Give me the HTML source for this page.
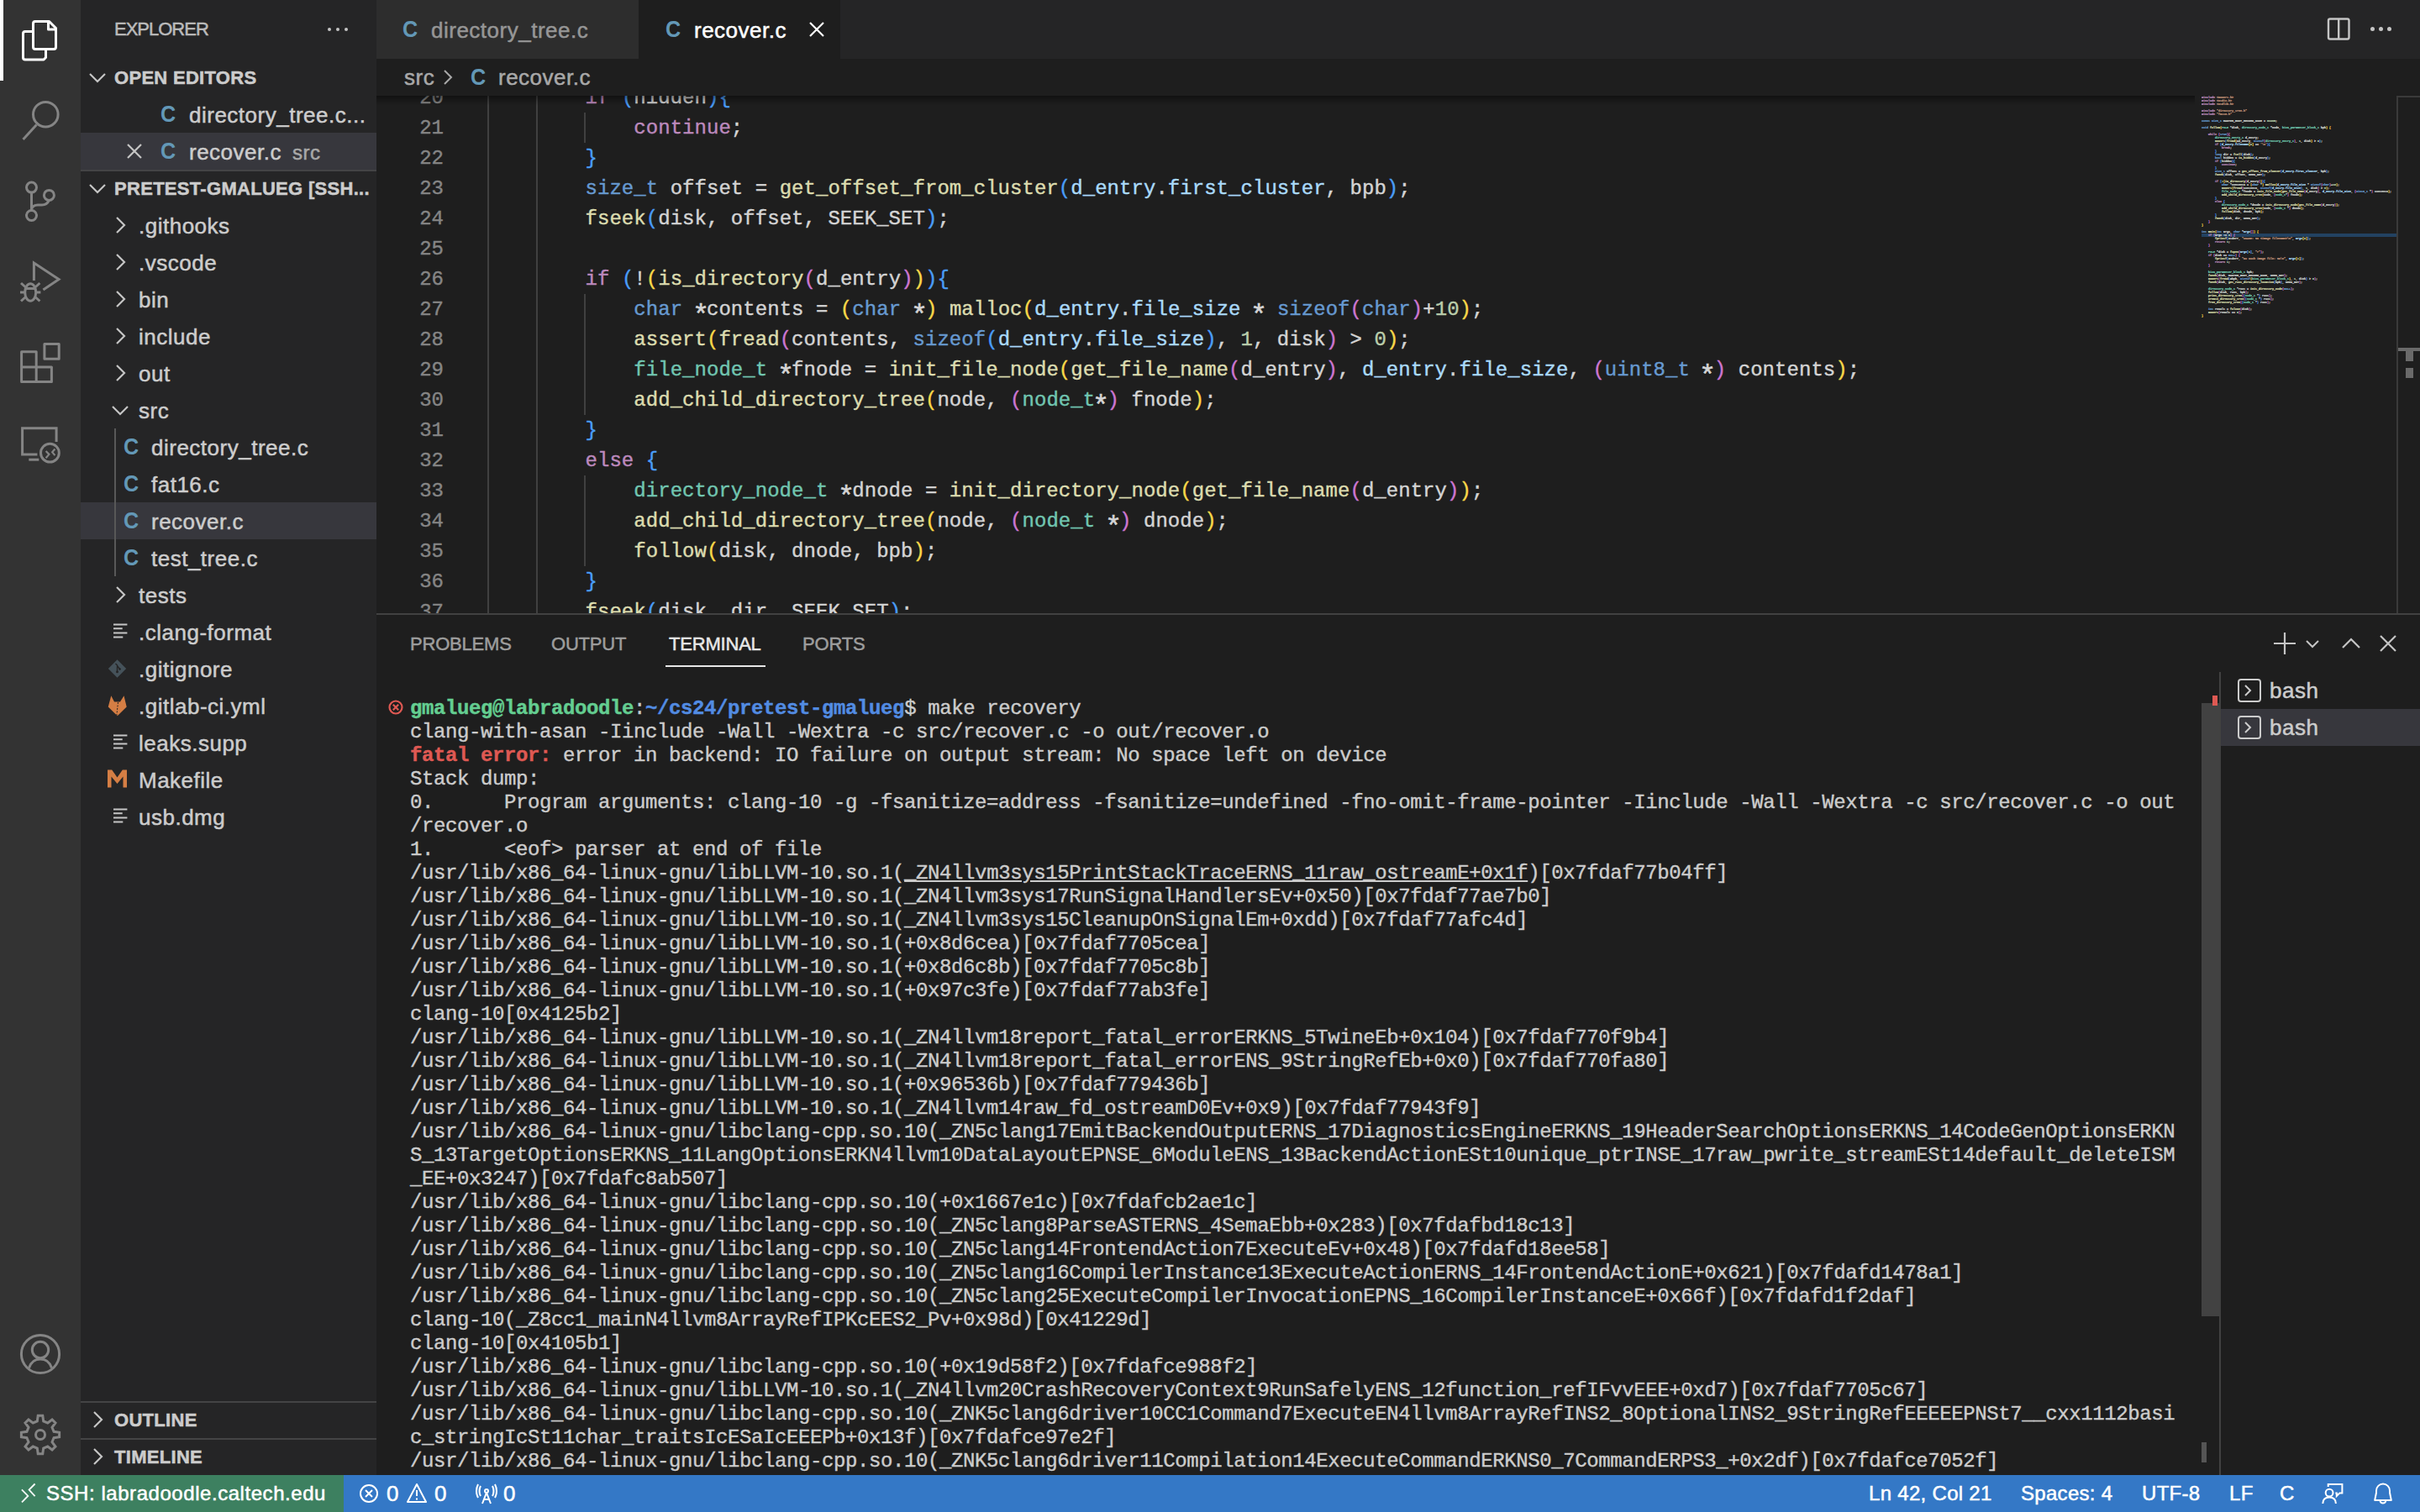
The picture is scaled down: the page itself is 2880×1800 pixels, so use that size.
<!DOCTYPE html><html><head><meta charset="utf-8"><style>
*{margin:0;padding:0;box-sizing:border-box}
html,body{width:2880px;height:1800px;overflow:hidden;background:#1e1e1e}
body{position:relative;font-family:"Liberation Sans",sans-serif;color:#cccccc}
.a{position:absolute}
.ui{font-family:"Liberation Sans",sans-serif;font-size:26px;letter-spacing:0.5px;white-space:pre;-webkit-text-stroke:0.5px currentColor}
.mono{font-family:"Liberation Mono",monospace;white-space:pre;-webkit-text-stroke:0.4px currentColor}
svg{position:absolute;overflow:visible}
</style></head><body><div class="a" style="left:0;top:0;width:96px;height:1756px;background:#333333"></div>
<div class="a" style="left:0;top:0;width:4px;height:96px;background:#ffffff"></div>
<svg style="left:0;top:0" width="96" height="96" fill="none" stroke="#ffffff" stroke-width="3" stroke-linejoin="round">
<path d="M54.5 58 V68.5 L52 71 H30 Q27.5 71 27.5 68.5 V40 Q27.5 37.5 30 37.5 H39.5"/>
<path d="M39.5 56 V28 Q39.5 25.5 42 25.5 H58.5 L66.5 33.5 V56 Q66.5 58.5 64 58.5 H42 Q39.5 58.5 39.5 56 Z" fill="#333333"/>
<path d="M57.5 25.5 V35 H66.5"/>
</svg>
<svg style="left:0;top:96px" width="96" height="96" fill="none" stroke="#858585" stroke-width="3">
<circle cx="54.3" cy="40.2" r="14.8"/>
<path d="M43.5 52.5 L27.5 70"/>
</svg>
<svg style="left:0;top:192px" width="96" height="96" fill="none" stroke="#858585" stroke-width="3">
<circle cx="37.5" cy="31.1" r="6"/>
<circle cx="58.4" cy="40.4" r="6"/>
<circle cx="37.5" cy="64.5" r="6"/>
<path d="M37.5 37.1 V58.5"/>
<path d="M58.4 46.4 Q56 52 50 52 H45 Q39 52 37.5 57"/>
</svg>
<svg style="left:0;top:288px" width="96" height="96" fill="none" stroke="#858585" stroke-width="3">
<path d="M40.4 46 V25 L70 44.5 L51.4 57"/>
<ellipse cx="36.2" cy="60" rx="6.5" ry="10.3"/>
<path d="M29.7 55.5 H42.7 M24 60 H29.7 M42.7 60 H48.4 M25 49 L30.5 54 M47.4 49 L41.9 54 M25 70.5 L30.5 65.5 M47.4 70.5 L41.9 65.5"/>
</svg>
<svg style="left:0;top:384px" width="96" height="96" fill="none" stroke="#858585" stroke-width="3" stroke-linejoin="round">
<path d="M52.9 25.4 H70.2 V43.2 H52.9 Z"/>
<path d="M25.6 34.8 H43.2 V53 H61.4 V70.5 H25.6 Z"/>
<path d="M25.6 53 H43.2 V70.5"/>
</svg>
<svg style="left:0;top:480px" width="96" height="96" fill="none" stroke="#858585" stroke-width="3">
<path d="M67.1 46 V29.7 H26.6 V61.1 H44.4"/>
<path d="M34.3 67.2 H46.3"/>
<circle cx="59.4" cy="59.2" r="10.9"/>
<path d="M54.6 57 L58.4 60.9 L54.6 65.3 M65.4 54.5 L62.2 58.3 L65.4 62.1" stroke-width="2.2"/>
</svg>
<svg style="left:0;top:1564px" width="96" height="96" fill="none" stroke="#858585" stroke-width="3">
<circle cx="48" cy="48" r="22.6"/>
<circle cx="48" cy="43" r="9.7"/>
<path d="M34.5 64.5 Q38 54 48 54 Q58 54 61.5 64.5"/>
</svg>
<svg style="left:0;top:1660px" width="96" height="96" fill="none" stroke="#858585" stroke-width="3" stroke-linejoin="miter">
<path d="M44.29 31.92 L45.22 25.37 L50.78 25.37 L51.71 31.92 L56.74 34.01 L62.04 30.03 L65.97 33.96 L61.99 39.26 L64.08 44.29 L70.63 45.22 L70.63 50.78 L64.08 51.71 L61.99 56.74 L65.97 62.04 L62.04 65.97 L56.74 61.99 L51.71 64.08 L50.78 70.63 L45.22 70.63 L44.29 64.08 L39.26 61.99 L33.96 65.97 L30.03 62.04 L34.01 56.74 L31.92 51.71 L25.37 50.78 L25.37 45.22 L31.92 44.29 L34.01 39.26 L30.03 33.96 L33.96 30.03 L39.26 34.01 Z"/>
<circle cx="48" cy="48" r="5.5"/>
</svg>
<div class="a" style="left:96px;top:0;width:352px;height:1756px;background:#252526"></div>
<div class="a ui" style="left:136px;top:0;height:70px;line-height:70px;font-size:22px;letter-spacing:-1px;color:#bbbbbb">EXPLORER</div>
<div class="a" style="left:390px;top:33px;width:4px;height:4px;border-radius:50%;background:#c5c5c5"></div>
<div class="a" style="left:400px;top:33px;width:4px;height:4px;border-radius:50%;background:#c5c5c5"></div>
<div class="a" style="left:410px;top:33px;width:4px;height:4px;border-radius:50%;background:#c5c5c5"></div>
<svg style="left:104px;top:80px" width="24" height="24" fill="none" stroke="#c5c5c5" stroke-width="2.2"><path d="M3 8 L12 17 L21 8"/></svg><div class="a ui" style="left:136px;top:71px;height:44px;line-height:44px;font-size:22px;font-weight:bold;letter-spacing:0.3px;color:#cccccc">OPEN EDITORS</div>
<div class="a" style="left:191px;top:114px;height:44px;line-height:44px;font-family:'Liberation Sans',sans-serif;font-weight:bold;font-size:28px;transform:scaleX(0.9);transform-origin:0 0;color:#6398b7">C</div>
<div class="a ui" style="left:225px;top:115px;height:44px;line-height:44px">directory_tree.c...</div>
<div class="a" style="left:96px;top:158px;width:352px;height:44px;background:#37373d"></div>
<svg style="left:148px;top:168px" width="24" height="24" fill="none" stroke="#c5c5c5" stroke-width="2.2"><path d="M4 4 L20 20 M20 4 L4 20"/></svg>
<div class="a" style="left:191px;top:158px;height:44px;line-height:44px;font-family:'Liberation Sans',sans-serif;font-weight:bold;font-size:28px;transform:scaleX(0.9);transform-origin:0 0;color:#6398b7">C</div>
<div class="a ui" style="left:225px;top:159px;height:44px;line-height:44px">recover.c<span style="margin-left:13px;font-size:24px;color:#a8a8a8">src</span></div>
<div class="a" style="left:96px;top:202px;width:352px;height:2px;background:#444445"></div><svg style="left:104px;top:212px" width="24" height="24" fill="none" stroke="#c5c5c5" stroke-width="2.2"><path d="M3 8 L12 17 L21 8"/></svg><div class="a ui" style="left:136px;top:203px;height:44px;line-height:44px;font-size:22px;font-weight:bold;letter-spacing:0.3px;color:#cccccc">PRETEST-GMALUEG [SSH...</div>
<svg style="left:131px;top:256px" width="24" height="24" fill="none" stroke="#c5c5c5" stroke-width="2.2"><path d="M8 3 L17 12 L8 21"/></svg>
<div class="a ui" style="left:165px;top:247px;height:44px;line-height:44px">.githooks</div>
<svg style="left:131px;top:300px" width="24" height="24" fill="none" stroke="#c5c5c5" stroke-width="2.2"><path d="M8 3 L17 12 L8 21"/></svg>
<div class="a ui" style="left:165px;top:291px;height:44px;line-height:44px">.vscode</div>
<svg style="left:131px;top:344px" width="24" height="24" fill="none" stroke="#c5c5c5" stroke-width="2.2"><path d="M8 3 L17 12 L8 21"/></svg>
<div class="a ui" style="left:165px;top:335px;height:44px;line-height:44px">bin</div>
<svg style="left:131px;top:388px" width="24" height="24" fill="none" stroke="#c5c5c5" stroke-width="2.2"><path d="M8 3 L17 12 L8 21"/></svg>
<div class="a ui" style="left:165px;top:379px;height:44px;line-height:44px">include</div>
<svg style="left:131px;top:432px" width="24" height="24" fill="none" stroke="#c5c5c5" stroke-width="2.2"><path d="M8 3 L17 12 L8 21"/></svg>
<div class="a ui" style="left:165px;top:423px;height:44px;line-height:44px">out</div>
<svg style="left:131px;top:476px" width="24" height="24" fill="none" stroke="#c5c5c5" stroke-width="2.2"><path d="M3 8 L12 17 L21 8"/></svg>
<div class="a ui" style="left:165px;top:467px;height:44px;line-height:44px">src</div>
<div class="a" style="left:147px;top:510px;height:44px;line-height:44px;font-family:'Liberation Sans',sans-serif;font-weight:bold;font-size:28px;transform:scaleX(0.9);transform-origin:0 0;color:#6398b7">C</div>
<div class="a ui" style="left:180px;top:511px;height:44px;line-height:44px">directory_tree.c</div>
<div class="a" style="left:147px;top:554px;height:44px;line-height:44px;font-family:'Liberation Sans',sans-serif;font-weight:bold;font-size:28px;transform:scaleX(0.9);transform-origin:0 0;color:#6398b7">C</div>
<div class="a ui" style="left:180px;top:555px;height:44px;line-height:44px">fat16.c</div>
<div class="a" style="left:96px;top:598px;width:352px;height:44px;background:#37373d"></div>
<div class="a" style="left:147px;top:598px;height:44px;line-height:44px;font-family:'Liberation Sans',sans-serif;font-weight:bold;font-size:28px;transform:scaleX(0.9);transform-origin:0 0;color:#6398b7">C</div>
<div class="a ui" style="left:180px;top:599px;height:44px;line-height:44px">recover.c</div>
<div class="a" style="left:147px;top:642px;height:44px;line-height:44px;font-family:'Liberation Sans',sans-serif;font-weight:bold;font-size:28px;transform:scaleX(0.9);transform-origin:0 0;color:#6398b7">C</div>
<div class="a ui" style="left:180px;top:643px;height:44px;line-height:44px">test_tree.c</div>
<svg style="left:131px;top:696px" width="24" height="24" fill="none" stroke="#c5c5c5" stroke-width="2.2"><path d="M8 3 L17 12 L8 21"/></svg>
<div class="a ui" style="left:165px;top:687px;height:44px;line-height:44px">tests</div>
<svg style="left:130px;top:740px" width="24" height="24" fill="none" stroke="#c5c5c5" stroke-width="2"><path d="M5 3.5 H21.4 M5 8.3 H15.7 M5 13.5 H21.4 M5 18.6 H16.3"/></svg>
<div class="a ui" style="left:165px;top:731px;height:44px;line-height:44px">.clang-format</div>
<svg style="left:128px;top:783px" width="26" height="26"><path d="M11.5 2.3 L22.2 13 L11.5 23.7 L0.8 13 Z" fill="#45525a"/><path d="M9.5 7 L11.5 9 V16.5 M11.5 9.5 L14.5 13.5" stroke="#252526" stroke-width="1.4" fill="none"/><circle cx="11.5" cy="16.8" r="1.5" fill="#252526"/><circle cx="14.6" cy="13.6" r="1.3" fill="#252526"/></svg>
<div class="a ui" style="left:165px;top:775px;height:44px;line-height:44px">.gitignore</div>
<svg style="left:128px;top:827px" width="26" height="26"><path d="M0.75 14.6 L4.3 1.2 L8 8.5 H15 L19.5 1.2 L22.7 14.6 L11.7 25.3 Z" fill="#d57e44"/><path d="M12.5 9 L10.8 25" stroke="#252526" stroke-width="1" stroke-dasharray="2 1.5" fill="none"/></svg>
<div class="a ui" style="left:165px;top:819px;height:44px;line-height:44px">.gitlab-ci.yml</div>
<svg style="left:130px;top:872px" width="24" height="24" fill="none" stroke="#c5c5c5" stroke-width="2"><path d="M5 3.5 H21.4 M5 8.3 H15.7 M5 13.5 H21.4 M5 18.6 H16.3"/></svg>
<div class="a ui" style="left:165px;top:863px;height:44px;line-height:44px">leaks.supp</div>
<svg style="left:127px;top:914px" width="26" height="26"><path d="M1 23.5 V2.5 H6.2 L12.5 11.5 L18.8 2.5 H24 V23.5 H19.5 V10.5 L12.5 19 L5.5 10.5 V23.5 Z" fill="#d57e44"/></svg>
<div class="a ui" style="left:165px;top:907px;height:44px;line-height:44px">Makefile</div>
<svg style="left:130px;top:960px" width="24" height="24" fill="none" stroke="#c5c5c5" stroke-width="2"><path d="M5 3.5 H21.4 M5 8.3 H15.7 M5 13.5 H21.4 M5 18.6 H16.3"/></svg>
<div class="a ui" style="left:165px;top:951px;height:44px;line-height:44px">usb.dmg</div>
<div class="a" style="left:136px;top:510px;width:2px;height:176px;background:#585858"></div>
<div class="a" style="left:96px;top:1668px;width:352px;height:2px;background:#444445"></div><svg style="left:104px;top:1678px" width="24" height="24" fill="none" stroke="#c5c5c5" stroke-width="2.2"><path d="M8 3 L17 12 L8 21"/></svg><div class="a ui" style="left:136px;top:1669px;height:44px;line-height:44px;font-size:22px;font-weight:bold;letter-spacing:0.3px;color:#cccccc">OUTLINE</div>
<div class="a" style="left:96px;top:1712px;width:352px;height:2px;background:#444445"></div><svg style="left:104px;top:1722px" width="24" height="24" fill="none" stroke="#c5c5c5" stroke-width="2.2"><path d="M8 3 L17 12 L8 21"/></svg><div class="a ui" style="left:136px;top:1713px;height:44px;line-height:44px;font-size:22px;font-weight:bold;letter-spacing:0.3px;color:#cccccc">TIMELINE</div>
<div class="a" style="left:448px;top:0;width:2432px;height:70px;background:#252526"></div>
<div class="a" style="left:448px;top:0;width:312px;height:70px;background:#2d2d2d"></div>
<div class="a" style="left:760px;top:0;width:240px;height:70px;background:#1e1e1e"></div>
<div class="a" style="left:479px;top:13px;height:44px;line-height:44px;font-weight:bold;font-size:28px;transform:scaleX(0.9);transform-origin:0 0;color:#6398b7">C</div>
<div class="a ui" style="left:513px;top:1px;height:70px;line-height:70px;color:#969696">directory_tree.c</div>
<div class="a" style="left:792px;top:13px;height:44px;line-height:44px;font-weight:bold;font-size:28px;transform:scaleX(0.9);transform-origin:0 0;color:#6398b7">C</div>
<div class="a ui" style="left:826px;top:1px;height:70px;line-height:70px;color:#ffffff">recover.c</div>
<svg style="left:960px;top:23px" width="24" height="24" fill="none" stroke="#ffffff" stroke-width="2.2"><path d="M4 4 L20 20 M20 4 L4 20"/></svg>
<svg style="left:2760px;top:11px" width="48" height="48" fill="none" stroke="#c5c5c5" stroke-width="2.4"><rect x="11" y="11.5" width="24.5" height="24" rx="2"/><path d="M23.2 11.5 V35.5"/></svg>
<div class="a" style="left:2821px;top:32px;width:5px;height:5px;border-radius:50%;background:#c5c5c5"></div>
<div class="a" style="left:2831px;top:32px;width:5px;height:5px;border-radius:50%;background:#c5c5c5"></div>
<div class="a" style="left:2841px;top:32px;width:5px;height:5px;border-radius:50%;background:#c5c5c5"></div>
<div class="a" style="left:448px;top:70px;width:2432px;height:44px;background:#1e1e1e"></div>
<div class="a ui" style="left:481px;top:70px;height:44px;line-height:44px;color:#a9a9a9">src</div>
<svg style="left:522px;top:81px" width="22" height="22" fill="none" stroke="#a9a9a9" stroke-width="2"><path d="M7 3 L15 11 L7 19"/></svg>
<div class="a" style="left:560px;top:70px;height:44px;line-height:44px;font-weight:bold;font-size:28px;transform:scaleX(0.9);transform-origin:0 0;color:#6398b7">C</div>
<div class="a ui" style="left:593px;top:70px;height:44px;line-height:44px;color:#a9a9a9">recover.c</div>
<div class="a" style="left:448px;top:114px;width:2432px;height:616px;overflow:hidden;background:#1e1e1e">
<div class="a mono" style="left:0;top:-15px;width:80px;text-align:right;height:36px;line-height:36px;font-size:24px;color:#858585">20</div>
<div class="a" style="left:132px;top:-16px;width:2px;height:36px;background:#404040"></div>
<div class="a" style="left:190px;top:-16px;width:2px;height:36px;background:#404040"></div>
<div class="a mono" style="left:133px;top:-15px;height:36px;line-height:36px;font-size:24px;letter-spacing:0.04px;color:#d4d4d4">        <span style="color:#bc89bd">if</span> <span style="color:#4a9df8">(</span>hidden<span style="color:#4a9df8">)</span><span style="color:#4a9df8">{</span></div>
<div class="a mono" style="left:0;top:21px;width:80px;text-align:right;height:36px;line-height:36px;font-size:24px;color:#858585">21</div>
<div class="a" style="left:132px;top:20px;width:2px;height:36px;background:#404040"></div>
<div class="a" style="left:190px;top:20px;width:2px;height:36px;background:#404040"></div>
<div class="a" style="left:247px;top:20px;width:2px;height:36px;background:#404040"></div>
<div class="a mono" style="left:133px;top:21px;height:36px;line-height:36px;font-size:24px;letter-spacing:0.04px;color:#d4d4d4">            <span style="color:#bc89bd">continue</span>;</div>
<div class="a mono" style="left:0;top:57px;width:80px;text-align:right;height:36px;line-height:36px;font-size:24px;color:#858585">22</div>
<div class="a" style="left:132px;top:56px;width:2px;height:36px;background:#404040"></div>
<div class="a" style="left:190px;top:56px;width:2px;height:36px;background:#404040"></div>
<div class="a mono" style="left:133px;top:57px;height:36px;line-height:36px;font-size:24px;letter-spacing:0.04px;color:#d4d4d4">        <span style="color:#4a9df8">}</span></div>
<div class="a mono" style="left:0;top:93px;width:80px;text-align:right;height:36px;line-height:36px;font-size:24px;color:#858585">23</div>
<div class="a" style="left:132px;top:92px;width:2px;height:36px;background:#404040"></div>
<div class="a" style="left:190px;top:92px;width:2px;height:36px;background:#404040"></div>
<div class="a mono" style="left:133px;top:93px;height:36px;line-height:36px;font-size:24px;letter-spacing:0.04px;color:#d4d4d4">        <span style="color:#679ad1">size_t</span> offset = <span style="color:#dcdcaf">get_offset_from_cluster</span><span style="color:#4a9df8">(</span><span style="color:#aadafa">d_entry</span>.<span style="color:#aadafa">first_cluster</span>, bpb<span style="color:#4a9df8">)</span>;</div>
<div class="a mono" style="left:0;top:129px;width:80px;text-align:right;height:36px;line-height:36px;font-size:24px;color:#858585">24</div>
<div class="a" style="left:132px;top:128px;width:2px;height:36px;background:#404040"></div>
<div class="a" style="left:190px;top:128px;width:2px;height:36px;background:#404040"></div>
<div class="a mono" style="left:133px;top:129px;height:36px;line-height:36px;font-size:24px;letter-spacing:0.04px;color:#d4d4d4">        <span style="color:#dcdcaf">fseek</span><span style="color:#4a9df8">(</span>disk, offset, SEEK_SET<span style="color:#4a9df8">)</span>;</div>
<div class="a mono" style="left:0;top:165px;width:80px;text-align:right;height:36px;line-height:36px;font-size:24px;color:#858585">25</div>
<div class="a" style="left:132px;top:164px;width:2px;height:36px;background:#404040"></div>
<div class="a" style="left:190px;top:164px;width:2px;height:36px;background:#404040"></div>
<div class="a mono" style="left:133px;top:165px;height:36px;line-height:36px;font-size:24px;letter-spacing:0.04px;color:#d4d4d4"></div>
<div class="a mono" style="left:0;top:201px;width:80px;text-align:right;height:36px;line-height:36px;font-size:24px;color:#858585">26</div>
<div class="a" style="left:132px;top:200px;width:2px;height:36px;background:#404040"></div>
<div class="a" style="left:190px;top:200px;width:2px;height:36px;background:#404040"></div>
<div class="a mono" style="left:133px;top:201px;height:36px;line-height:36px;font-size:24px;letter-spacing:0.04px;color:#d4d4d4">        <span style="color:#bc89bd">if</span> <span style="color:#4a9df8">(</span>!<span style="color:#f9d849">(</span><span style="color:#dcdcaf">is_directory</span><span style="color:#cc76d1">(</span>d_entry<span style="color:#cc76d1">)</span><span style="color:#f9d849">)</span><span style="color:#4a9df8">)</span><span style="color:#4a9df8">{</span></div>
<div class="a mono" style="left:0;top:237px;width:80px;text-align:right;height:36px;line-height:36px;font-size:24px;color:#858585">27</div>
<div class="a" style="left:132px;top:236px;width:2px;height:36px;background:#404040"></div>
<div class="a" style="left:190px;top:236px;width:2px;height:36px;background:#404040"></div>
<div class="a" style="left:247px;top:236px;width:2px;height:36px;background:#404040"></div>
<div class="a mono" style="left:133px;top:237px;height:36px;line-height:36px;font-size:24px;letter-spacing:0.04px;color:#d4d4d4">            <span style="color:#679ad1">char</span> <span style="display:inline-block;width:14.44px;transform:translateY(8px) scale(1.4)">*</span>contents = <span style="color:#f9d849">(</span><span style="color:#679ad1">char</span> <span style="display:inline-block;width:14.44px;transform:translateY(8px) scale(1.4)">*</span><span style="color:#f9d849">)</span> <span style="color:#dcdcaf">malloc</span><span style="color:#f9d849">(</span><span style="color:#aadafa">d_entry</span>.<span style="color:#aadafa">file_size</span> <span style="display:inline-block;width:14.44px;transform:translateY(8px) scale(1.4)">*</span> <span style="color:#679ad1">sizeof</span><span style="color:#cc76d1">(</span><span style="color:#679ad1">char</span><span style="color:#cc76d1">)</span>+<span style="color:#bacdab">10</span><span style="color:#f9d849">)</span>;</div>
<div class="a mono" style="left:0;top:273px;width:80px;text-align:right;height:36px;line-height:36px;font-size:24px;color:#858585">28</div>
<div class="a" style="left:132px;top:272px;width:2px;height:36px;background:#404040"></div>
<div class="a" style="left:190px;top:272px;width:2px;height:36px;background:#404040"></div>
<div class="a" style="left:247px;top:272px;width:2px;height:36px;background:#404040"></div>
<div class="a mono" style="left:133px;top:273px;height:36px;line-height:36px;font-size:24px;letter-spacing:0.04px;color:#d4d4d4">            <span style="color:#dcdcaf">assert</span><span style="color:#f9d849">(</span><span style="color:#dcdcaf">fread</span><span style="color:#cc76d1">(</span>contents, <span style="color:#679ad1">sizeof</span><span style="color:#4a9df8">(</span><span style="color:#aadafa">d_entry</span>.<span style="color:#aadafa">file_size</span><span style="color:#4a9df8">)</span>, <span style="color:#bacdab">1</span>, disk<span style="color:#cc76d1">)</span> &gt; <span style="color:#bacdab">0</span><span style="color:#f9d849">)</span>;</div>
<div class="a mono" style="left:0;top:309px;width:80px;text-align:right;height:36px;line-height:36px;font-size:24px;color:#858585">29</div>
<div class="a" style="left:132px;top:308px;width:2px;height:36px;background:#404040"></div>
<div class="a" style="left:190px;top:308px;width:2px;height:36px;background:#404040"></div>
<div class="a" style="left:247px;top:308px;width:2px;height:36px;background:#404040"></div>
<div class="a mono" style="left:133px;top:309px;height:36px;line-height:36px;font-size:24px;letter-spacing:0.04px;color:#d4d4d4">            <span style="color:#71c6b1">file_node_t</span> <span style="display:inline-block;width:14.44px;transform:translateY(8px) scale(1.4)">*</span>fnode = <span style="color:#dcdcaf">init_file_node</span><span style="color:#f9d849">(</span><span style="color:#dcdcaf">get_file_name</span><span style="color:#cc76d1">(</span>d_entry<span style="color:#cc76d1">)</span>, <span style="color:#aadafa">d_entry</span>.<span style="color:#aadafa">file_size</span>, <span style="color:#cc76d1">(</span><span style="color:#679ad1">uint8_t</span> <span style="display:inline-block;width:14.44px;transform:translateY(8px) scale(1.4)">*</span><span style="color:#cc76d1">)</span> contents<span style="color:#f9d849">)</span>;</div>
<div class="a mono" style="left:0;top:345px;width:80px;text-align:right;height:36px;line-height:36px;font-size:24px;color:#858585">30</div>
<div class="a" style="left:132px;top:344px;width:2px;height:36px;background:#404040"></div>
<div class="a" style="left:190px;top:344px;width:2px;height:36px;background:#404040"></div>
<div class="a" style="left:247px;top:344px;width:2px;height:36px;background:#404040"></div>
<div class="a mono" style="left:133px;top:345px;height:36px;line-height:36px;font-size:24px;letter-spacing:0.04px;color:#d4d4d4">            <span style="color:#dcdcaf">add_child_directory_tree</span><span style="color:#f9d849">(</span>node, <span style="color:#cc76d1">(</span><span style="color:#71c6b1">node_t</span><span style="display:inline-block;width:14.44px;transform:translateY(8px) scale(1.4)">*</span><span style="color:#cc76d1">)</span> fnode<span style="color:#f9d849">)</span>;</div>
<div class="a mono" style="left:0;top:381px;width:80px;text-align:right;height:36px;line-height:36px;font-size:24px;color:#858585">31</div>
<div class="a" style="left:132px;top:380px;width:2px;height:36px;background:#404040"></div>
<div class="a" style="left:190px;top:380px;width:2px;height:36px;background:#404040"></div>
<div class="a mono" style="left:133px;top:381px;height:36px;line-height:36px;font-size:24px;letter-spacing:0.04px;color:#d4d4d4">        <span style="color:#4a9df8">}</span></div>
<div class="a mono" style="left:0;top:417px;width:80px;text-align:right;height:36px;line-height:36px;font-size:24px;color:#858585">32</div>
<div class="a" style="left:132px;top:416px;width:2px;height:36px;background:#404040"></div>
<div class="a" style="left:190px;top:416px;width:2px;height:36px;background:#404040"></div>
<div class="a mono" style="left:133px;top:417px;height:36px;line-height:36px;font-size:24px;letter-spacing:0.04px;color:#d4d4d4">        <span style="color:#bc89bd">else</span> <span style="color:#4a9df8">{</span></div>
<div class="a mono" style="left:0;top:453px;width:80px;text-align:right;height:36px;line-height:36px;font-size:24px;color:#858585">33</div>
<div class="a" style="left:132px;top:452px;width:2px;height:36px;background:#404040"></div>
<div class="a" style="left:190px;top:452px;width:2px;height:36px;background:#404040"></div>
<div class="a" style="left:247px;top:452px;width:2px;height:36px;background:#404040"></div>
<div class="a mono" style="left:133px;top:453px;height:36px;line-height:36px;font-size:24px;letter-spacing:0.04px;color:#d4d4d4">            <span style="color:#71c6b1">directory_node_t</span> <span style="display:inline-block;width:14.44px;transform:translateY(8px) scale(1.4)">*</span>dnode = <span style="color:#dcdcaf">init_directory_node</span><span style="color:#f9d849">(</span><span style="color:#dcdcaf">get_file_name</span><span style="color:#cc76d1">(</span>d_entry<span style="color:#cc76d1">)</span><span style="color:#f9d849">)</span>;</div>
<div class="a mono" style="left:0;top:489px;width:80px;text-align:right;height:36px;line-height:36px;font-size:24px;color:#858585">34</div>
<div class="a" style="left:132px;top:488px;width:2px;height:36px;background:#404040"></div>
<div class="a" style="left:190px;top:488px;width:2px;height:36px;background:#404040"></div>
<div class="a" style="left:247px;top:488px;width:2px;height:36px;background:#404040"></div>
<div class="a mono" style="left:133px;top:489px;height:36px;line-height:36px;font-size:24px;letter-spacing:0.04px;color:#d4d4d4">            <span style="color:#dcdcaf">add_child_directory_tree</span><span style="color:#f9d849">(</span>node, <span style="color:#cc76d1">(</span><span style="color:#71c6b1">node_t</span> <span style="display:inline-block;width:14.44px;transform:translateY(8px) scale(1.4)">*</span><span style="color:#cc76d1">)</span> dnode<span style="color:#f9d849">)</span>;</div>
<div class="a mono" style="left:0;top:525px;width:80px;text-align:right;height:36px;line-height:36px;font-size:24px;color:#858585">35</div>
<div class="a" style="left:132px;top:524px;width:2px;height:36px;background:#404040"></div>
<div class="a" style="left:190px;top:524px;width:2px;height:36px;background:#404040"></div>
<div class="a" style="left:247px;top:524px;width:2px;height:36px;background:#404040"></div>
<div class="a mono" style="left:133px;top:525px;height:36px;line-height:36px;font-size:24px;letter-spacing:0.04px;color:#d4d4d4">            <span style="color:#dcdcaf">follow</span><span style="color:#f9d849">(</span>disk, dnode, bpb<span style="color:#f9d849">)</span>;</div>
<div class="a mono" style="left:0;top:561px;width:80px;text-align:right;height:36px;line-height:36px;font-size:24px;color:#858585">36</div>
<div class="a" style="left:132px;top:560px;width:2px;height:36px;background:#404040"></div>
<div class="a" style="left:190px;top:560px;width:2px;height:36px;background:#404040"></div>
<div class="a mono" style="left:133px;top:561px;height:36px;line-height:36px;font-size:24px;letter-spacing:0.04px;color:#d4d4d4">        <span style="color:#4a9df8">}</span></div>
<div class="a mono" style="left:0;top:597px;width:80px;text-align:right;height:36px;line-height:36px;font-size:24px;color:#858585">37</div>
<div class="a" style="left:132px;top:596px;width:2px;height:36px;background:#404040"></div>
<div class="a" style="left:190px;top:596px;width:2px;height:36px;background:#404040"></div>
<div class="a mono" style="left:133px;top:597px;height:36px;line-height:36px;font-size:24px;letter-spacing:0.04px;color:#d4d4d4">        <span style="color:#dcdcaf">fseek</span><span style="color:#4a9df8">(</span>disk, dir, SEEK_SET<span style="color:#4a9df8">)</span>;</div>
</div>
<div class="a" style="left:448px;top:114px;width:2164px;height:12px;background:linear-gradient(rgba(0,0,0,0.45) 0%,rgba(0,0,0,0.25) 35%,rgba(0,0,0,0) 100%)"></div>
<div class="a" style="left:2620px;top:114px;width:232px;height:616px;overflow:hidden">
<div class="a" style="left:0;top:164px;width:232px;height:4px;background:rgba(38,79,120,0.75)"></div>
<div class="a" style="left:0;top:0;font-family:'Liberation Mono',monospace;white-space:pre;font-size:10px;line-height:10px;font-weight:bold;color:#d4d4d4;transform:scale(0.3333,0.4);transform-origin:0 0;-webkit-text-stroke:0.6px currentColor"><span style="color:#bc89bd">#include</span> <span style="color:#c5947c">&lt;assert.h&gt;</span>
<span style="color:#bc89bd">#include</span> <span style="color:#c5947c">&lt;stdio.h&gt;</span>
<span style="color:#bc89bd">#include</span> <span style="color:#c5947c">&lt;stdlib.h&gt;</span>

<span style="color:#bc89bd">#include</span> <span style="color:#c5947c">&quot;directory_tree.h&quot;</span>
<span style="color:#bc89bd">#include</span> <span style="color:#c5947c">&quot;fat16.h&quot;</span>

<span style="color:#679ad1">const</span> <span style="color:#679ad1">size_t</span> MASTER_BOOT_RECORD_SIZE = <span style="color:#bacdab">0x20B</span>;

<span style="color:#679ad1">void</span> <span style="color:#dcdcaf">follow</span><span style="color:#f9d849">(</span><span style="color:#71c6b1">FILE</span> *disk, <span style="color:#71c6b1">directory_node_t</span> *node, <span style="color:#71c6b1">bios_parameter_block_t</span> bpb<span style="color:#f9d849">)</span> <span style="color:#f9d849">{</span>

    <span style="color:#bc89bd">while</span> <span style="color:#cc76d1">(</span><span style="color:#679ad1">true</span><span style="color:#cc76d1">)</span><span style="color:#cc76d1">{</span>
        <span style="color:#71c6b1">directory_entry_t</span> d_entry;
        <span style="color:#dcdcaf">assert</span><span style="color:#4a9df8">(</span><span style="color:#dcdcaf">fread</span><span style="color:#f9d849">(</span>&amp;d_entry, <span style="color:#679ad1">sizeof</span><span style="color:#cc76d1">(</span><span style="color:#71c6b1">directory_entry_t</span><span style="color:#cc76d1">)</span>, <span style="color:#bacdab">1</span>, disk<span style="color:#f9d849">)</span> &gt; <span style="color:#bacdab">0</span><span style="color:#4a9df8">)</span>;
        <span style="color:#bc89bd">if</span> <span style="color:#4a9df8">(</span><span style="color:#aadafa">d_entry</span>.<span style="color:#aadafa">filename</span><span style="color:#f9d849">[</span><span style="color:#bacdab">0</span><span style="color:#f9d849">]</span> == <span style="color:#c5947c">&#x27;\0&#x27;</span><span style="color:#4a9df8">)</span><span style="color:#4a9df8">{</span>
            <span style="color:#bc89bd">break</span>;
        <span style="color:#4a9df8">}</span>
        <span style="color:#679ad1">long</span> dir = <span style="color:#dcdcaf">ftell</span><span style="color:#4a9df8">(</span>disk<span style="color:#4a9df8">)</span>;
        <span style="color:#679ad1">bool</span> hidden = <span style="color:#dcdcaf">is_hidden</span><span style="color:#4a9df8">(</span>d_entry<span style="color:#4a9df8">)</span>;
        <span style="color:#bc89bd">if</span> <span style="color:#4a9df8">(</span>hidden<span style="color:#4a9df8">)</span><span style="color:#4a9df8">{</span>
            <span style="color:#bc89bd">continue</span>;
        <span style="color:#4a9df8">}</span>
        <span style="color:#679ad1">size_t</span> offset = <span style="color:#dcdcaf">get_offset_from_cluster</span><span style="color:#4a9df8">(</span><span style="color:#aadafa">d_entry</span>.<span style="color:#aadafa">first_cluster</span>, bpb<span style="color:#4a9df8">)</span>;
        <span style="color:#dcdcaf">fseek</span><span style="color:#4a9df8">(</span>disk, offset, SEEK_SET<span style="color:#4a9df8">)</span>;

        <span style="color:#bc89bd">if</span> <span style="color:#4a9df8">(</span>!<span style="color:#f9d849">(</span><span style="color:#dcdcaf">is_directory</span><span style="color:#cc76d1">(</span>d_entry<span style="color:#cc76d1">)</span><span style="color:#f9d849">)</span><span style="color:#4a9df8">)</span><span style="color:#4a9df8">{</span>
            <span style="color:#679ad1">char</span> *contents = <span style="color:#f9d849">(</span><span style="color:#679ad1">char</span> *<span style="color:#f9d849">)</span> <span style="color:#dcdcaf">malloc</span><span style="color:#f9d849">(</span><span style="color:#aadafa">d_entry</span>.<span style="color:#aadafa">file_size</span> * <span style="color:#679ad1">sizeof</span><span style="color:#cc76d1">(</span><span style="color:#679ad1">char</span><span style="color:#cc76d1">)</span>+<span style="color:#bacdab">10</span><span style="color:#f9d849">)</span>;
            <span style="color:#dcdcaf">assert</span><span style="color:#f9d849">(</span><span style="color:#dcdcaf">fread</span><span style="color:#cc76d1">(</span>contents, <span style="color:#679ad1">sizeof</span><span style="color:#4a9df8">(</span><span style="color:#aadafa">d_entry</span>.<span style="color:#aadafa">file_size</span><span style="color:#4a9df8">)</span>, <span style="color:#bacdab">1</span>, disk<span style="color:#cc76d1">)</span> &gt; <span style="color:#bacdab">0</span><span style="color:#f9d849">)</span>;
            <span style="color:#71c6b1">file_node_t</span> *fnode = <span style="color:#dcdcaf">init_file_node</span><span style="color:#f9d849">(</span><span style="color:#dcdcaf">get_file_name</span><span style="color:#cc76d1">(</span>d_entry<span style="color:#cc76d1">)</span>, <span style="color:#aadafa">d_entry</span>.<span style="color:#aadafa">file_size</span>, <span style="color:#cc76d1">(</span><span style="color:#679ad1">uint8_t</span> *<span style="color:#cc76d1">)</span> contents<span style="color:#f9d849">)</span>;
            <span style="color:#dcdcaf">add_child_directory_tree</span><span style="color:#f9d849">(</span>node, <span style="color:#cc76d1">(</span><span style="color:#71c6b1">node_t</span>*<span style="color:#cc76d1">)</span> fnode<span style="color:#f9d849">)</span>;
        <span style="color:#4a9df8">}</span>
        <span style="color:#bc89bd">else</span> <span style="color:#4a9df8">{</span>
            <span style="color:#71c6b1">directory_node_t</span> *dnode = <span style="color:#dcdcaf">init_directory_node</span><span style="color:#f9d849">(</span><span style="color:#dcdcaf">get_file_name</span><span style="color:#cc76d1">(</span>d_entry<span style="color:#cc76d1">)</span><span style="color:#f9d849">)</span>;
            <span style="color:#dcdcaf">add_child_directory_tree</span><span style="color:#f9d849">(</span>node, <span style="color:#cc76d1">(</span><span style="color:#71c6b1">node_t</span> *<span style="color:#cc76d1">)</span> dnode<span style="color:#f9d849">)</span>;
            <span style="color:#dcdcaf">follow</span><span style="color:#f9d849">(</span>disk, dnode, bpb<span style="color:#f9d849">)</span>;
        <span style="color:#4a9df8">}</span>
        <span style="color:#dcdcaf">fseek</span><span style="color:#4a9df8">(</span>disk, dir, SEEK_SET<span style="color:#4a9df8">)</span>;
    <span style="color:#cc76d1">}</span>
<span style="color:#f9d849">}</span>

<span style="color:#679ad1">int</span> <span style="color:#dcdcaf">main</span><span style="color:#f9d849">(</span><span style="color:#679ad1">int</span> argc, <span style="color:#679ad1">char</span> *<span style="color:#aadafa">argv</span><span style="color:#cc76d1">[</span><span style="color:#cc76d1">]</span><span style="color:#f9d849">)</span> <span style="color:#f9d849">{</span>
    <span style="color:#bc89bd">if</span> <span style="color:#cc76d1">(</span>argc != <span style="color:#bacdab">2</span><span style="color:#cc76d1">)</span> <span style="color:#cc76d1">{</span>
        <span style="color:#dcdcaf">fprintf</span><span style="color:#4a9df8">(</span>stderr, <span style="color:#c5947c">&quot;USAGE: %s &lt;image filename&gt;\n&quot;</span>, <span style="color:#aadafa">argv</span><span style="color:#f9d849">[</span><span style="color:#bacdab">0</span><span style="color:#f9d849">]</span><span style="color:#4a9df8">)</span>;
        <span style="color:#bc89bd">return</span> <span style="color:#bacdab">1</span>;
    <span style="color:#cc76d1">}</span>

    <span style="color:#71c6b1">FILE</span> *disk = <span style="color:#dcdcaf">fopen</span><span style="color:#cc76d1">(</span><span style="color:#aadafa">argv</span><span style="color:#4a9df8">[</span><span style="color:#bacdab">1</span><span style="color:#4a9df8">]</span>, <span style="color:#c5947c">&quot;r&quot;</span><span style="color:#cc76d1">)</span>;
    <span style="color:#bc89bd">if</span> <span style="color:#cc76d1">(</span>disk == <span style="color:#679ad1">NULL</span><span style="color:#cc76d1">)</span> <span style="color:#cc76d1">{</span>
        <span style="color:#dcdcaf">fprintf</span><span style="color:#4a9df8">(</span>stderr, <span style="color:#c5947c">&quot;No such image file: %s\n&quot;</span>, <span style="color:#aadafa">argv</span><span style="color:#f9d849">[</span><span style="color:#bacdab">1</span><span style="color:#f9d849">]</span><span style="color:#4a9df8">)</span>;
        <span style="color:#bc89bd">return</span> <span style="color:#bacdab">1</span>;
    <span style="color:#cc76d1">}</span>

    <span style="color:#71c6b1">bios_parameter_block_t</span> bpb;
    <span style="color:#dcdcaf">fseek</span><span style="color:#cc76d1">(</span>disk, MASTER_BOOT_RECORD_SIZE, SEEK_SET<span style="color:#cc76d1">)</span>;
    <span style="color:#dcdcaf">assert</span><span style="color:#cc76d1">(</span><span style="color:#dcdcaf">fread</span><span style="color:#4a9df8">(</span>&amp;bpb, <span style="color:#679ad1">sizeof</span><span style="color:#f9d849">(</span><span style="color:#71c6b1">bios_parameter_block_t</span><span style="color:#f9d849">)</span>, <span style="color:#bacdab">1</span>, disk<span style="color:#4a9df8">)</span> &gt; <span style="color:#bacdab">0</span><span style="color:#cc76d1">)</span>;
    <span style="color:#dcdcaf">fseek</span><span style="color:#cc76d1">(</span>disk, <span style="color:#dcdcaf">get_root_directory_location</span><span style="color:#4a9df8">(</span>bpb<span style="color:#4a9df8">)</span>, SEEK_SET<span style="color:#cc76d1">)</span>;

    <span style="color:#71c6b1">directory_node_t</span> *root = <span style="color:#dcdcaf">init_directory_node</span><span style="color:#cc76d1">(</span><span style="color:#679ad1">NULL</span><span style="color:#cc76d1">)</span>;
    <span style="color:#dcdcaf">follow</span><span style="color:#cc76d1">(</span>disk, root, bpb<span style="color:#cc76d1">)</span>;
    <span style="color:#dcdcaf">print_directory_tree</span><span style="color:#cc76d1">(</span><span style="color:#4a9df8">(</span><span style="color:#71c6b1">node_t</span> *<span style="color:#4a9df8">)</span> root<span style="color:#cc76d1">)</span>;
    <span style="color:#dcdcaf">create_directory_tree</span><span style="color:#cc76d1">(</span><span style="color:#4a9df8">(</span><span style="color:#71c6b1">node_t</span> *<span style="color:#4a9df8">)</span> root<span style="color:#cc76d1">)</span>;
    <span style="color:#dcdcaf">free_directory_tree</span><span style="color:#cc76d1">(</span><span style="color:#4a9df8">(</span><span style="color:#71c6b1">node_t</span> *<span style="color:#4a9df8">)</span> root<span style="color:#cc76d1">)</span>;

    <span style="color:#679ad1">int</span> result = <span style="color:#dcdcaf">fclose</span><span style="color:#cc76d1">(</span>disk<span style="color:#cc76d1">)</span>;
    <span style="color:#dcdcaf">assert</span><span style="color:#cc76d1">(</span>result == <span style="color:#bacdab">0</span><span style="color:#cc76d1">)</span>;
<span style="color:#f9d849">}</span></div>
</div>
<div class="a" style="left:2852px;top:114px;width:2px;height:616px;background:#3a3a3a"></div>
<div class="a" style="left:2852px;top:114px;width:28px;height:2px;background:#3a3a3a"></div>
<div class="a" style="left:2854px;top:414px;width:26px;height:4px;background:#6a6a6a"></div>
<div class="a" style="left:2863px;top:418px;width:9px;height:12px;background:#6a6a6a"></div>
<div class="a" style="left:2863px;top:438px;width:9px;height:12px;background:#6a6a6a"></div>
<div class="a" style="left:448px;top:730px;width:2432px;height:1026px;background:#1e1e1e"></div>
<div class="a" style="left:448px;top:730px;width:2432px;height:2px;background:#414141"></div>
<div class="a ui" style="left:488px;top:745px;height:44px;line-height:44px;font-size:22px;letter-spacing:-0.2px;color:#9d9d9d">PROBLEMS</div>
<div class="a ui" style="left:656px;top:745px;height:44px;line-height:44px;font-size:22px;letter-spacing:-0.2px;color:#9d9d9d">OUTPUT</div>
<div class="a ui" style="left:796px;top:745px;height:44px;line-height:44px;font-size:22px;letter-spacing:-0.2px;color:#e7e7e7">TERMINAL</div>
<div class="a ui" style="left:955px;top:745px;height:44px;line-height:44px;font-size:22px;letter-spacing:-0.2px;color:#9d9d9d">PORTS</div>
<div class="a" style="left:792px;top:792px;width:119px;height:2px;background:#e7e7e7"></div>
<svg style="left:2695px;top:742px" width="48" height="48" fill="none" stroke="#c5c5c5" stroke-width="2.2"><path d="M24 11 V37 M11 24 H37"/></svg>
<svg style="left:2740px;top:754px" width="24" height="24" fill="none" stroke="#c5c5c5" stroke-width="2"><path d="M5 9 L12 16 L19 9"/></svg>
<svg style="left:2774px;top:742px" width="48" height="48" fill="none" stroke="#c5c5c5" stroke-width="2.2"><path d="M14 29 L24 19 L34 29"/></svg>
<svg style="left:2818px;top:742px" width="48" height="48" fill="none" stroke="#c5c5c5" stroke-width="2.2"><path d="M15 15 L33 33 M33 15 L15 33"/></svg>
<div class="a" style="left:2641px;top:800px;width:2px;height:956px;background:#414141"></div>
<div class="a" style="left:2643px;top:844px;width:237px;height:44px;background:#37373d"></div>
<svg style="left:2662px;top:807px" width="30" height="30" fill="none" stroke="#cccccc" stroke-width="2"><rect x="2" y="2" width="26" height="26" rx="3"/><path d="M10 9 L16 15 L10 21"/></svg>
<div class="a ui" style="left:2701px;top:800px;height:44px;line-height:44px;color:#cccccc">bash</div>
<svg style="left:2662px;top:851px" width="30" height="30" fill="none" stroke="#cccccc" stroke-width="2"><rect x="2" y="2" width="26" height="26" rx="3"/><path d="M10 9 L16 15 L10 21"/></svg>
<div class="a ui" style="left:2701px;top:844px;height:44px;line-height:44px;color:#cccccc">bash</div>
<div class="a" style="left:2620px;top:837px;width:21px;height:730px;background:rgba(121,121,121,0.4)"></div>
<div class="a" style="left:2633px;top:828px;width:6px;height:12px;background:#df5953"></div>
<div class="a" style="left:2620px;top:1717px;width:6px;height:24px;background:rgba(121,121,121,0.6)"></div>
<div class="a mono" style="left:488px;top:830px;font-size:24px;letter-spacing:-0.4px;line-height:28px;color:#cccccc"><b style="color:#64ce91">gmalueg@labradoodle</b>:<b style="color:#528ce3">~/cs24/pretest-gmalueg</b>$ make recovery
clang-with-asan -Iinclude -Wall -Wextra -c src/recover.c -o out/recover.o
<b style="color:#df5953">fatal error:</b> error in backend: IO failure on output stream: No space left on device
Stack dump:
0.      Program arguments: clang-10 -g -fsanitize=address -fsanitize=undefined -fno-omit-frame-pointer -Iinclude -Wall -Wextra -c src/recover.c -o out
/recover.o
1.      &lt;eof&gt; parser at end of file
/usr/lib/x86_64-linux-gnu/libLLVM-10.so.1(<u>_ZN4llvm3sys15PrintStackTraceERNS_11raw_ostreamE+0x1f</u>)[0x7fdaf77b04ff]
/usr/lib/x86_64-linux-gnu/libLLVM-10.so.1(_ZN4llvm3sys17RunSignalHandlersEv+0x50)[0x7fdaf77ae7b0]
/usr/lib/x86_64-linux-gnu/libLLVM-10.so.1(_ZN4llvm3sys15CleanupOnSignalEm+0xdd)[0x7fdaf77afc4d]
/usr/lib/x86_64-linux-gnu/libLLVM-10.so.1(+0x8d6cea)[0x7fdaf7705cea]
/usr/lib/x86_64-linux-gnu/libLLVM-10.so.1(+0x8d6c8b)[0x7fdaf7705c8b]
/usr/lib/x86_64-linux-gnu/libLLVM-10.so.1(+0x97c3fe)[0x7fdaf77ab3fe]
clang-10[0x4125b2]
/usr/lib/x86_64-linux-gnu/libLLVM-10.so.1(_ZN4llvm18report_fatal_errorERKNS_5TwineEb+0x104)[0x7fdaf770f9b4]
/usr/lib/x86_64-linux-gnu/libLLVM-10.so.1(_ZN4llvm18report_fatal_errorENS_9StringRefEb+0x0)[0x7fdaf770fa80]
/usr/lib/x86_64-linux-gnu/libLLVM-10.so.1(+0x96536b)[0x7fdaf779436b]
/usr/lib/x86_64-linux-gnu/libLLVM-10.so.1(_ZN4llvm14raw_fd_ostreamD0Ev+0x9)[0x7fdaf77943f9]
/usr/lib/x86_64-linux-gnu/libclang-cpp.so.10(_ZN5clang17EmitBackendOutputERNS_17DiagnosticsEngineERKNS_19HeaderSearchOptionsERKNS_14CodeGenOptionsERKN
S_13TargetOptionsERKNS_11LangOptionsERKN4llvm10DataLayoutEPNSE_6ModuleENS_13BackendActionESt10unique_ptrINSE_17raw_pwrite_streamESt14default_deleteISM
_EE+0x3247)[0x7fdafc8ab507]
/usr/lib/x86_64-linux-gnu/libclang-cpp.so.10(+0x1667e1c)[0x7fdafcb2ae1c]
/usr/lib/x86_64-linux-gnu/libclang-cpp.so.10(_ZN5clang8ParseASTERNS_4SemaEbb+0x283)[0x7fdafbd18c13]
/usr/lib/x86_64-linux-gnu/libclang-cpp.so.10(_ZN5clang14FrontendAction7ExecuteEv+0x48)[0x7fdafd18ee58]
/usr/lib/x86_64-linux-gnu/libclang-cpp.so.10(_ZN5clang16CompilerInstance13ExecuteActionERNS_14FrontendActionE+0x621)[0x7fdafd1478a1]
/usr/lib/x86_64-linux-gnu/libclang-cpp.so.10(_ZN5clang25ExecuteCompilerInvocationEPNS_16CompilerInstanceE+0x66f)[0x7fdafd1f2daf]
clang-10(_Z8cc1_mainN4llvm8ArrayRefIPKcEES2_Pv+0x98d)[0x41229d]
clang-10[0x4105b1]
/usr/lib/x86_64-linux-gnu/libclang-cpp.so.10(+0x19d58f2)[0x7fdafce988f2]
/usr/lib/x86_64-linux-gnu/libLLVM-10.so.1(_ZN4llvm20CrashRecoveryContext9RunSafelyENS_12function_refIFvvEEE+0xd7)[0x7fdaf7705c67]
/usr/lib/x86_64-linux-gnu/libclang-cpp.so.10(_ZNK5clang6driver10CC1Command7ExecuteEN4llvm8ArrayRefINS2_8OptionalINS2_9StringRefEEEEEPNSt7__cxx1112basi
c_stringIcSt11char_traitsIcESaIcEEEPb+0x13f)[0x7fdafce97e2f]
/usr/lib/x86_64-linux-gnu/libclang-cpp.so.10(_ZNK5clang6driver11Compilation14ExecuteCommandERKNS0_7CommandERPS3_+0x2df)[0x7fdafce7052f]</div>
<svg style="left:459px;top:830px" width="24" height="24" fill="none" stroke="#df5953" stroke-width="2.2"><circle cx="12" cy="12" r="7.5"/><path d="M8.8 8.8 L15.2 15.2 M15.2 8.8 L8.8 15.2"/></svg>
<div class="a" style="left:0;top:1756px;width:2880px;height:44px;background:#3478c6"></div>
<div class="a" style="left:0;top:1756px;width:409px;height:44px;background:#3d8060"></div>
<svg style="left:0;top:1756px" width="60" height="44" fill="none" stroke="#ffffff" stroke-width="1.8"><path d="M25.9 17.3 L33.3 24.9 L26 32.4 M41.6 10.5 L34.6 17.6 L41.6 25.2"/></svg>
<div class="a ui" style="left:55px;top:1756px;height:44px;line-height:44px;font-size:24px;letter-spacing:0.55px;color:#ffffff">SSH: labradoodle.caltech.edu</div>
<svg style="left:427px;top:1766px" width="24" height="24" fill="none" stroke="#ffffff" stroke-width="2"><circle cx="12" cy="12" r="10"/><path d="M8 8 L16 16 M16 8 L8 16"/></svg>
<div class="a ui" style="left:460px;top:1756px;height:44px;line-height:44px;color:#ffffff">0</div>
<svg style="left:483px;top:1765px" width="26" height="26" fill="none" stroke="#ffffff" stroke-width="2" stroke-linejoin="round"><path d="M13 2 L24 23 H2 Z"/><path d="M13 9 V16 M13 18.5 V20.5"/></svg>
<div class="a ui" style="left:517px;top:1756px;height:44px;line-height:44px;color:#ffffff">0</div>
<svg style="left:566px;top:1765px" width="26" height="26" fill="none" stroke="#ffffff" stroke-width="2"><circle cx="13" cy="10" r="2"/><path d="M13 12 L8 25 M13 12 L18 25 M10 20 H16 M6 4 Q3 10 6 16 M20 4 Q23 10 20 16 M3 2 Q-1 10 3 18 M23 2 Q27 10 23 18"/></svg>
<div class="a ui" style="left:599px;top:1756px;height:44px;line-height:44px;color:#ffffff">0</div>
<div class="a ui" style="left:2224px;top:1756px;height:44px;line-height:44px;font-size:24px;letter-spacing:0.3px;color:#ffffff">Ln 42, Col 21</div>
<div class="a ui" style="left:2405px;top:1756px;height:44px;line-height:44px;font-size:24px;letter-spacing:0.3px;color:#ffffff">Spaces: 4</div>
<div class="a ui" style="left:2549px;top:1756px;height:44px;line-height:44px;font-size:24px;letter-spacing:0.3px;color:#ffffff">UTF-8</div>
<div class="a ui" style="left:2653px;top:1756px;height:44px;line-height:44px;font-size:24px;letter-spacing:0.3px;color:#ffffff">LF</div>
<div class="a ui" style="left:2713px;top:1756px;height:44px;line-height:44px;font-size:24px;letter-spacing:0.3px;color:#ffffff">C</div>
<svg style="left:2740px;top:1756px" width="140" height="44" fill="none" stroke="#ffffff" stroke-width="2"><path d="M30.7 14 V11 H47.4 V21.4 H44.4 L40.8 25 V21.4 H39.3"/><circle cx="32.1" cy="21.1" r="4.4"/><path d="M24.3 34 Q24.3 26.4 32.1 26.4 Q39.9 26.4 39.9 34"/><path d="M86.2 29.9 H105.8 L104 21 V18.5 A8 8 0 0 0 88 18.5 V21 Z M92.6 30.8 A3.3 2.8 0 0 0 99.2 30.8" stroke-linejoin="round"/></svg></body></html>
